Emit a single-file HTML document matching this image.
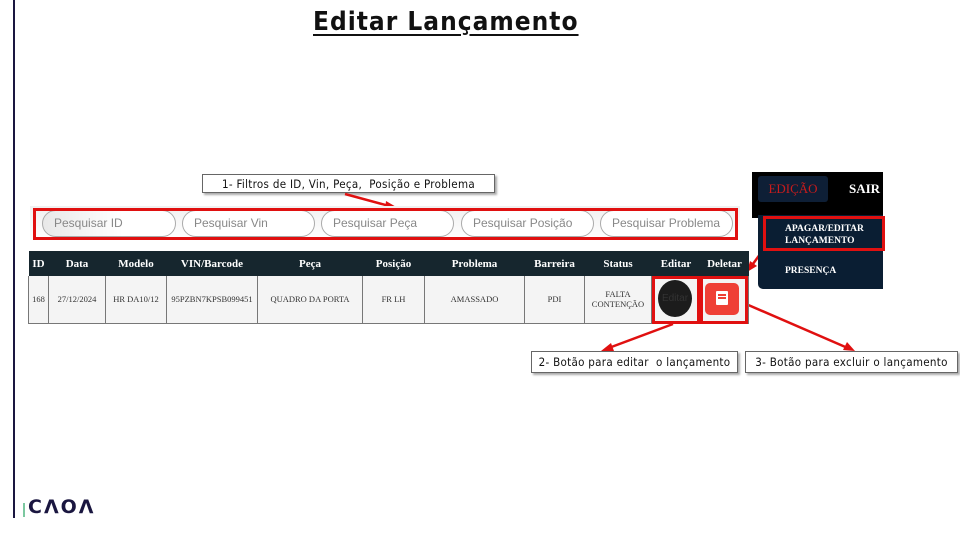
<!DOCTYPE html>
<html><head><meta charset="utf-8"><style>
*{margin:0;padding:0;box-sizing:border-box}
body{width:960px;height:540px;background:#fff;position:relative;overflow:hidden;font-family:"Liberation Sans",sans-serif}
.a{position:absolute}
.title{left:313px;top:7px;font-size:26px;font-weight:bold;text-decoration:underline;text-decoration-thickness:2px;text-underline-offset:4px;color:#111;font-family:"DejaVu Sans Condensed","Liberation Sans",sans-serif;letter-spacing:1px}
.lbl{background:#fff;border:1px solid #666;box-shadow:2px 2px 2px #aaa;font-family:"DejaVu Sans Condensed","Liberation Sans",sans-serif;font-size:11.5px;color:#111;text-align:center;line-height:18px;letter-spacing:0.3px}
.inp{top:210px;height:27px;border:1px solid #aaa;border-radius:14px;font-size:12px;color:#888;padding-left:11px;line-height:25px;background:#fff}
table{position:absolute;left:28px;top:251px;border-collapse:collapse;font-family:"Liberation Serif",serif}
th{background:#16262e;color:#fff;font-size:11px;height:25px;font-weight:bold}
td{border:1px solid #777;border-top:none;background:#f4f4f4;font-size:8.5px;color:#333;height:47px;text-align:center;vertical-align:middle}
.red{border:3px solid #e01010}
</style></head><body>
<div class="a" style="left:13px;top:0;width:2px;height:518px;background:#1a1640"></div>
<div class="a title">Editar Lançamento</div>

<div class="a lbl" style="left:202px;top:174px;width:293px;height:19px">1- Filtros de ID, Vin, Peça,&nbsp; Posição e Problema</div>
<svg class="a" style="left:0;top:0" width="960" height="540">
<g stroke="#e01010" stroke-width="2.5" fill="#e01010">
<line x1="345" y1="194" x2="393" y2="207"/><polygon points="398,208 386,201 385,210" stroke="none"/>
<line x1="673" y1="324" x2="606" y2="349"/><polygon points="601,351 611,343 614,351" stroke="none"/>
<line x1="746" y1="304" x2="850" y2="349"/><polygon points="855,351 843,350 847,342" stroke="none"/>
<line x1="766" y1="246" x2="750" y2="268"/><polygon points="747,272 750,261 757,266" stroke="none"/>
</g></svg>

<div class="a" style="left:30px;top:206px;width:710px;height:35px;background:linear-gradient(#f0f0f0,#fff)"></div>
<div class="a inp" style="left:42px;width:134px;background:linear-gradient(90deg,#e8e8e8,#fff 60%)">Pesquisar ID</div>
<div class="a inp" style="left:182px;width:133px">Pesquisar Vin</div>
<div class="a inp" style="left:321px;width:133px">Pesquisar Peça</div>
<div class="a inp" style="left:461px;width:133px">Pesquisar Posição</div>
<div class="a inp" style="left:600px;width:133px">Pesquisar Problema</div>
<div class="a red" style="left:33px;top:208px;width:705px;height:32px"></div>

<table>
<tr><th style="width:20px">ID</th><th style="width:57px">Data</th><th style="width:61px">Modelo</th><th style="width:91px">VIN/Barcode</th><th style="width:105px">Peça</th><th style="width:62px">Posição</th><th style="width:100px">Problema</th><th style="width:60px">Barreira</th><th style="width:67px">Status</th><th style="width:49px">Editar</th><th style="width:48px">Deletar</th></tr>
<tr><td>168</td><td>27/12/2024</td><td>HR DA10/12</td><td>95PZBN7KPSB099451</td><td>QUADRO DA PORTA</td><td>FR LH</td><td>AMASSADO</td><td>PDI</td><td>FALTA<br>CONTENÇÃO</td><td></td><td></td></tr>
</table>
<div class="a" style="left:658px;top:280px;width:34px;height:37px;border-radius:50%;background:#1c1c1c;color:#333;font-size:10px;text-align:center;line-height:37px">Editar</div>
<div class="a" style="left:705px;top:283px;width:34px;height:32px;border-radius:5px;background:#ef4036"></div>
<div class="a" style="left:716px;top:291px;width:12px;height:14px;background:#fff;border-radius:1px"></div>
<div class="a" style="left:718px;top:294px;width:8px;height:1.5px;background:#ef4036"></div>
<div class="a" style="left:718px;top:297px;width:8px;height:1.5px;background:#ef4036"></div>
<div class="a red" style="left:652px;top:276px;width:48px;height:48px"></div>
<div class="a red" style="left:700px;top:276px;width:48px;height:48px"></div>

<div class="a" style="left:752px;top:172px;width:131px;height:46px;background:#000"></div>
<div class="a" style="left:758px;top:176px;width:70px;height:26px;background:#0e1f36;border-radius:3px;color:#c81c1c;font-family:'Liberation Serif',serif;font-size:13px;text-align:center;line-height:26px">EDIÇÃO</div>
<div class="a" style="left:849px;top:176px;color:#fff;font-family:'Liberation Serif',serif;font-size:13px;font-weight:bold;line-height:26px">SAIR</div>
<div class="a" style="left:758px;top:215px;width:125px;height:74px;background:#0a1e33;border-radius:0 0 0 5px"></div>
<div class="a" style="left:785px;top:223px;color:#fff;font-family:'Liberation Serif',serif;font-size:9.5px;font-weight:bold;line-height:12px">APAGAR/EDITAR<br>LANÇAMENTO</div>
<div class="a" style="left:785px;top:266px;color:#fff;font-family:'Liberation Serif',serif;font-size:9.5px;font-weight:bold">PRESENÇA</div>
<div class="a red" style="left:763px;top:216px;width:122px;height:35px"></div>

<div class="a lbl" style="left:531px;top:351px;width:207px;height:22px;line-height:21px">2- Botão para editar&nbsp; o lançamento</div>
<div class="a lbl" style="left:745px;top:351px;width:213px;height:22px;line-height:21px">3- Botão para excluir o lançamento</div>

<div class="a" style="left:23px;top:503px;width:2px;height:14px;background:#7cc8a0"></div>
<div class="a" style="left:28px;top:496px;font-family:'DejaVu Sans',sans-serif;font-weight:bold;font-size:19px;color:#1a1640;letter-spacing:2px">CΛOΛ</div>
</body></html>
